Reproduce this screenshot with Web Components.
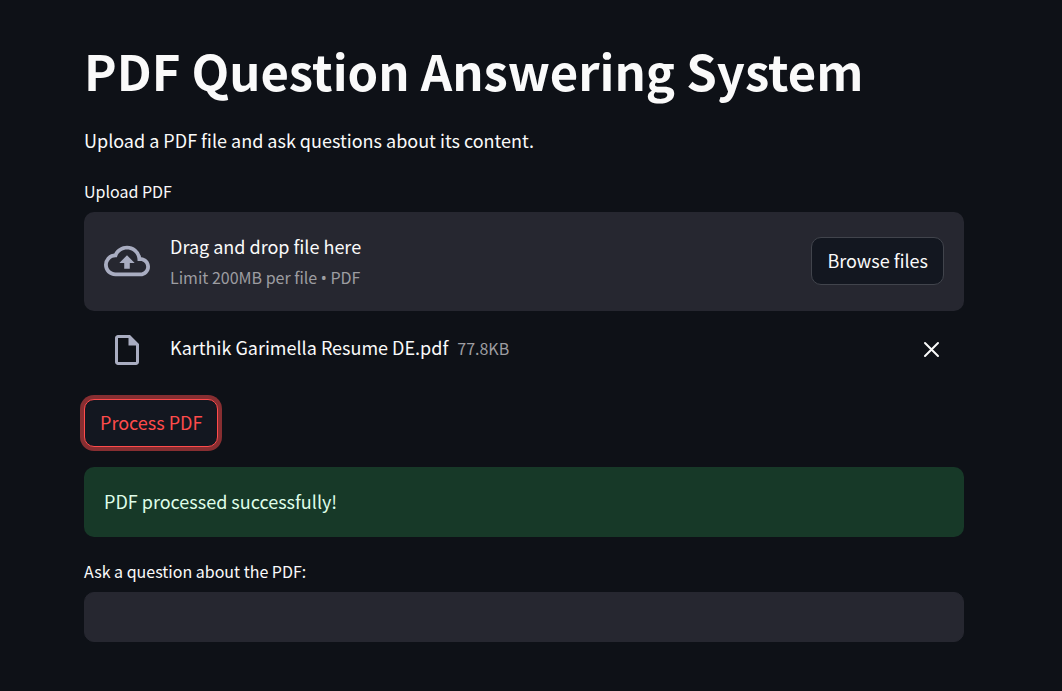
<!DOCTYPE html>
<html lang="en">
<head>
<meta charset="utf-8">
<meta name="viewport" content="width=device-width, initial-scale=1">
<title>PDF Question Answering System</title>
<style>
  html { background: #0e1117; }
  body {
    margin: 0;
    background: #0e1117;
    color: #fafafa;
    font: 18px/32px "Noto Sans CJK SC", "Noto Sans", sans-serif;
    --panel: #262730;
    --button: #131720;
    --line: #41444c;
    --muted: #9d9da1;
    --icon: #a9adc1;
    --accent: #ff4b4b;
    --radius: 10px;
    --label-size: 16px;
  }
</style>
</head>
<body>
<qa-page>
  <qa-heading>PDF Question Answering System</qa-heading>
  <qa-text>Upload a PDF file and ask questions about its content.</qa-text>
  <qa-uploader label="Upload PDF" limit="Limit 200MB per file" types="PDF">
    <qa-file name="Karthik Garimella Resume DE.pdf" size="77.8KB"></qa-file>
  </qa-uploader>
  <qa-button focused>Process PDF</qa-button>
  <qa-alert>PDF processed successfully!</qa-alert>
  <qa-input label="Ask a question about the PDF:"></qa-input>
</qa-page>

<script>
const define = (name, html, setup) => {
  const template = document.createElement("template");
  template.innerHTML = html;
  customElements.define(name, class extends HTMLElement {
    constructor() {
      super();
      this.attachShadow({ mode: "open" }).append(template.content.cloneNode(true));
    }
    connectedCallback() {
      if (setup) setup(this, this.shadowRoot);
    }
  });
};

const buttonStyle = `
  button {
    display: block;
    box-sizing: border-box;
    min-height: 48px;
    margin: 0;
    padding: 0 15px 2px;
    border: 1px solid var(--line);
    border-radius: var(--radius);
    background: var(--button);
    color: inherit;
    font: inherit;
    white-space: nowrap;
    cursor: pointer;
  }`;

const labelStyle = `
  label {
    display: block;
    margin-bottom: 10px;
    font-size: var(--label-size);
    line-height: 22px;
  }`;

define("qa-page", `
  <style>
    :host { display: block; padding: 36px 98px 48px 84px; }
    main { display: flex; flex-direction: column; gap: 20px; max-width: 880px; margin: 0 auto; }
  </style>
  <main><slot></slot></main>`);

define("qa-heading", `
  <style>
    :host { display: block; }
    h1 { margin: 0; font-size: 49px; line-height: 68px; font-weight: 700; }
  </style>
  <h1><slot></slot></h1>`);

define("qa-text", `
  <style>
    :host { display: block; }
    p { margin: 0 0 4px; }
  </style>
  <p><slot></slot></p>`);

define("qa-button", `
  <style>
    :host { display: block; align-self: flex-start; }
    ${buttonStyle}
    :host([focused]) button {
      border-color: var(--accent);
      color: var(--accent);
      box-shadow: 0 0 0 4px rgba(255, 75, 75, .5);
      outline: none;
    }
  </style>
  <button type="button"><slot></slot></button>`);

define("qa-uploader", `
  <style>
    :host { display: block; }
    ${labelStyle}
    ${buttonStyle}
    section {
      display: flex;
      align-items: center;
      gap: 20px;
      padding: 18px 20px 19px;
      border-radius: var(--radius);
      background: var(--panel);
    }
    svg { flex: none; width: 46px; height: 46px; fill: var(--icon); }
    .text { flex: 1; min-width: 0; }
    .limit { color: var(--muted); font-size: var(--label-size); line-height: 30px; }
    .dot { font-family: "Noto Sans", sans-serif; line-height: 1; }
  </style>
  <label for="browse"></label>
  <section>
    <svg viewBox="0 0 24 24" aria-hidden="true">
      <path d="M19.35 10.04A7.49 7.49 0 0 0 12 4C9.11 4 6.6 5.64 5.35 8.04A5.994 5.994 0 0 0 0 14c0 3.31 2.69 6 6 6h13c2.76 0 5-2.24 5-5 0-2.64-2.05-4.78-4.65-4.96zM19 18H6c-2.21 0-4-1.79-4-4s1.79-4 4-4h.71C7.37 7.69 9.48 6 12 6c3.04 0 5.5 2.46 5.5 5.5v.5H19c1.66 0 3 1.34 3 3s-1.34 3-3 3z"/>
      <path d="M8 13h2.55v3h2.9v-3H16l-4-4z"/>
    </svg>
    <div class="text">
      <div>Drag and drop file here</div>
      <div class="limit"><span class="max"></span> <span class="dot">•</span> <span class="types"></span></div>
    </div>
    <button type="button" id="browse">Browse files</button>
  </section>
  <slot></slot>`, (host, root) => {
    root.querySelector("label").textContent = host.getAttribute("label");
    root.querySelector(".max").textContent = host.getAttribute("limit");
    root.querySelector(".types").textContent = host.getAttribute("types");
  });

define("qa-file", `
  <style>
    :host { display: flex; align-items: center; gap: 20px; padding: 19px 20px 11px; }
    .icon { flex: none; display: flex; justify-content: center; width: 46px; padding-top: 2px; }
    .icon svg { width: 36px; height: 36px; fill: var(--icon); }
    .text { display: flex; flex: 1; align-items: baseline; gap: 9px; min-width: 0; padding-bottom: 4px; }
    .size { color: var(--muted); font-size: var(--label-size); }
    button {
      display: flex; align-items: center; justify-content: center;
      width: 25px; height: 25px; margin: 0; padding: 0;
      border: 0; background: none; color: inherit; cursor: pointer;
    }
    button svg { width: 25px; height: 25px; fill: none; stroke: currentColor; stroke-width: 2; stroke-linecap: round; }
  </style>
  <span class="icon">
    <svg viewBox="0 0 24 24" aria-hidden="true">
      <path d="M6 2c-1.1 0-2 .9-2 2v16c0 1.1.9 2 2 2h12c1.1 0 2-.9 2-2V8l-6-6H6zm0 18V4h7v5h5v11H6z"/>
    </svg>
  </span>
  <div class="text"><span class="name"></span><span class="size"></span></div>
  <button type="button" aria-label="Remove file">
    <svg viewBox="0 0 25 25" aria-hidden="true"><path d="M6 6l13 13M19 6L6 19"/></svg>
  </button>`, (host, root) => {
    root.querySelector(".name").textContent = host.getAttribute("name");
    root.querySelector(".size").textContent = host.getAttribute("size");
  });

define("qa-alert", `
  <style>
    :host { display: block; padding: 18px 20px 20px; border-radius: var(--radius); background: #173928; color: #dffde9; }
  </style>
  <div role="status"><slot></slot></div>`);

define("qa-input", `
  <style>
    :host { display: block; margin-top: 3px; }
    ${labelStyle}
    input {
      display: block;
      box-sizing: border-box;
      width: 100%;
      height: 50px;
      margin: 0;
      padding: 0 16px;
      border: 1px solid var(--panel);
      border-radius: var(--radius);
      background: var(--panel);
      color: inherit;
      font: inherit;
      outline: none;
    }
  </style>
  <label for="field"></label>
  <input id="field" type="text">`, (host, root) => {
    root.querySelector("label").textContent = host.getAttribute("label");
  });
</script>
</body>
</html>
